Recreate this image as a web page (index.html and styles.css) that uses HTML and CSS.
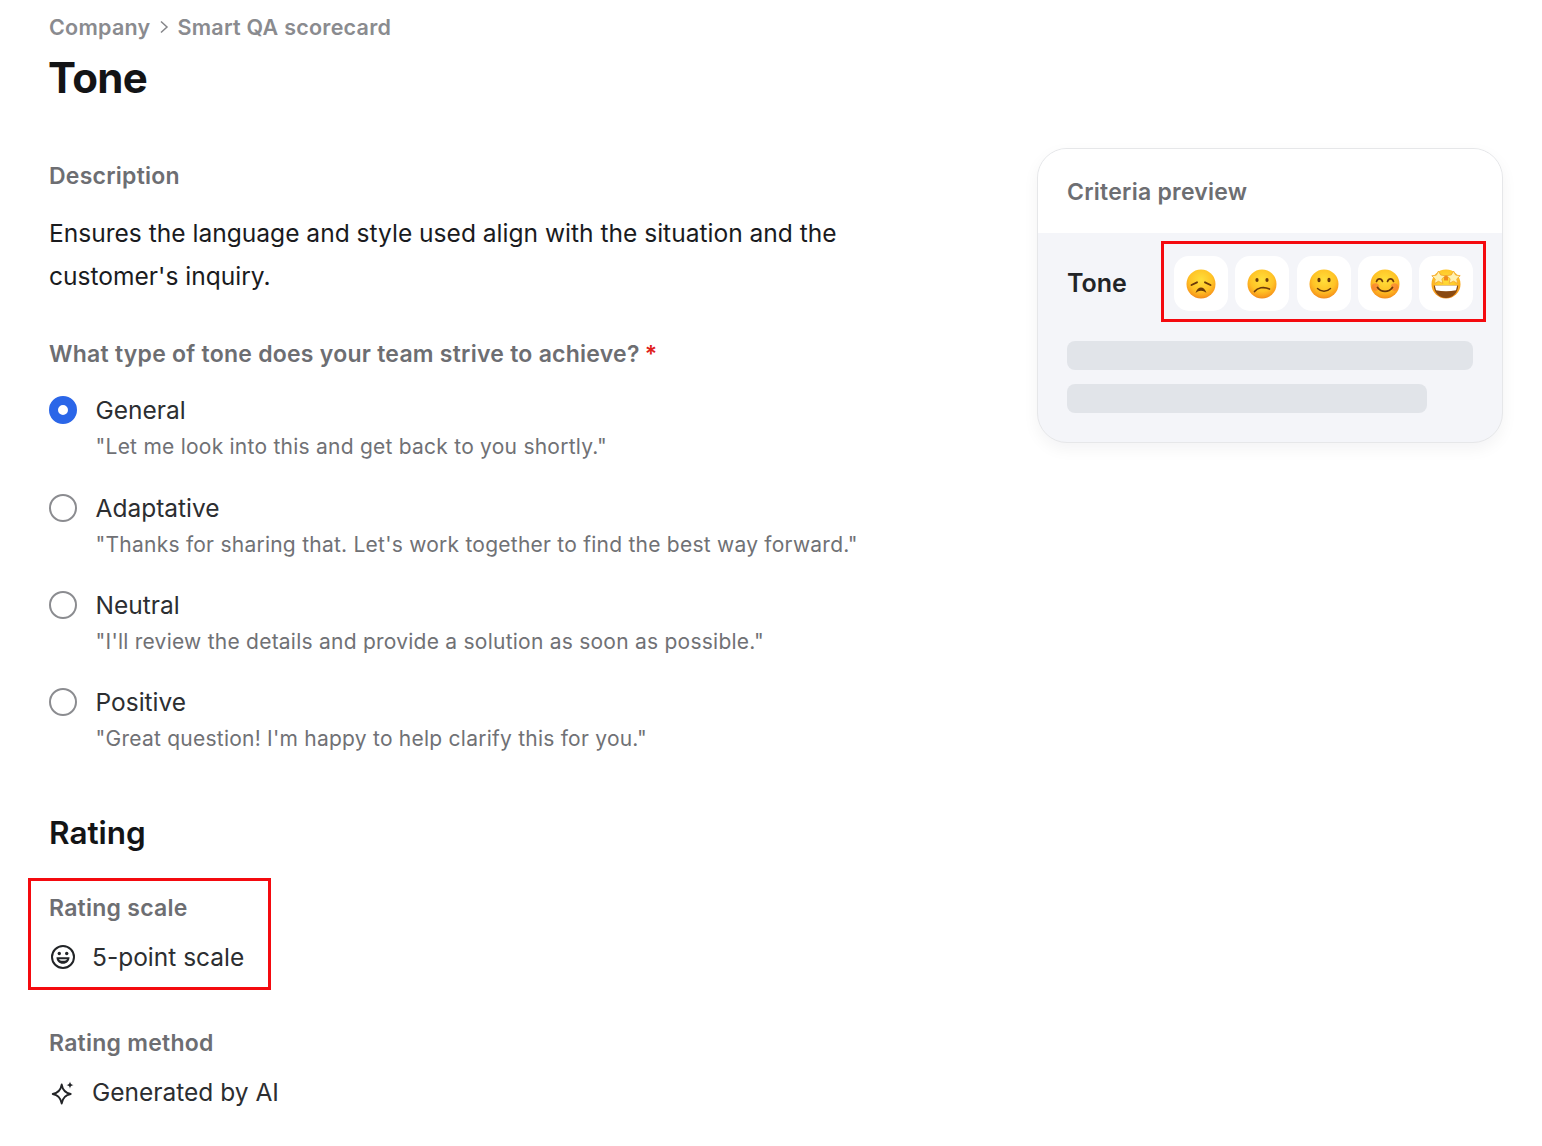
FILE: index.html
```html
<!DOCTYPE html>
<html lang="en">
<head>
<meta charset="utf-8">
<title>Tone</title>
<link rel="stylesheet" href="styles.css">
</head>
<body>
<svg class="defs" width="0" height="0" aria-hidden="true">
  <defs>
    <radialGradient id="face" cx="50%" cy="36%" r="66%">
      <stop offset="0" stop-color="#ffdf3a"/>
      <stop offset="0.6" stop-color="#ffc326"/>
      <stop offset="0.88" stop-color="#f99c1c"/>
      <stop offset="1" stop-color="#e9821c"/>
    </radialGradient>
  </defs>
</svg>
<main class="page">
  <section class="content">
    <nav class="crumbs">
      <span>Company</span>
      <svg class="chev" viewBox="0 0 12 16" width="12" height="16"><path d="M3 2.500 9 8l-6 5.500" fill="none" stroke="#85868a" stroke-width="1.500"/></svg>
      <span>Smart QA scorecard</span>
    </nav>
    <h1 class="title">Tone</h1>

    <h3 class="label desc-label">Description</h3>
    <p class="desc">Ensures the language and style used align with the situation and the customer's inquiry.</p>

    <h3 class="label q-label">What type of tone does your team strive to achieve? <span class="req">*</span></h3>
    <div class="options">
      <div class="opt">
        <span class="radio on"></span>
        <div class="opt-text"><div class="opt-name">General</div><div class="opt-sub">"Let me look into this and get back to you shortly."</div></div>
      </div>
      <div class="opt">
        <span class="radio"></span>
        <div class="opt-text"><div class="opt-name">Adaptative</div><div class="opt-sub">"Thanks for sharing that. Let's work together to find the best way forward."</div></div>
      </div>
      <div class="opt">
        <span class="radio"></span>
        <div class="opt-text"><div class="opt-name">Neutral</div><div class="opt-sub">"I'll review the details and provide a solution as soon as possible."</div></div>
      </div>
      <div class="opt">
        <span class="radio"></span>
        <div class="opt-text"><div class="opt-name">Positive</div><div class="opt-sub">"Great question! I'm happy to help clarify this for you."</div></div>
      </div>
    </div>

    <h2 class="section">Rating</h2>
    <div class="field marked">
      <h3 class="label">Rating scale</h3>
      <div class="value">
        <svg viewBox="0 0 28 28" width="28" height="28" fill="none"><circle cx="14" cy="14" r="11" stroke="#222427" stroke-width="2"/><circle cx="10.300" cy="10.500" r="1.700" fill="#222427"/><circle cx="17.700" cy="10.500" r="1.700" fill="#222427"/><path d="M7.500 14.300h13c0 3.900-2.800 6.500-6.500 6.500s-6.500-2.600-6.500-6.500Z" fill="#222427"/><path d="M10 16.200h8c-.5 1.100-2 1.500-4 1.500s-3.500-.4-4-1.500Z" fill="#fff"/></svg>
        <span>5-point scale</span>
      </div>
    </div>
    <div class="field">
      <h3 class="label">Rating method</h3>
      <div class="value">
        <svg viewBox="0 0 28 28" width="28" height="28" fill="none"><path d="M12.700 6.500c.9 5.600 3.400 8.500 9 9.500-5.600 1-8.100 3.900-9 9.500-.9-5.600-3.400-8.500-9-9.500 5.600-1 8.100-3.900 9-9.500Z" stroke="#222427" stroke-width="1.800" stroke-linejoin="round"/><path d="M21 3.500c.4 2.300 1.300 3.200 3.600 3.600-2.300.4-3.200 1.300-3.600 3.600-.4-2.300-1.300-3.200-3.600-3.600 2.300-.4 3.200-1.300 3.600-3.600Z" fill="#222427"/></svg>
        <span>Generated by AI</span>
      </div>
    </div>
  </section>

  <aside class="card">
    <header class="card-head">Criteria preview</header>
    <div class="card-body">
      <div class="rating-row">
        <span class="rating-name">Tone</span>
        <div class="tiles">
          <span class="tile"><svg viewBox="0 0 32 32" width="32" height="32"><circle cx="16" cy="16" r="14.500" fill="url(#face)"/><path d="M6.500 17 12 14.300M25.500 17 20 14.300" stroke="#6b3a0a" stroke-width="1.900" stroke-linecap="round" fill="none"/><path d="M10.500 25c1.300-3.800 3.300-5.500 5.500-5.500s4.200 1.700 5.500 5.500c-1.900-1.500-3.600-2.300-5.500-2.300s-3.600.8-5.500 2.300Z" fill="#6b3a0a"/></svg></span>
          <span class="tile"><svg viewBox="0 0 32 32" width="32" height="32"><circle cx="16" cy="16" r="14.500" fill="url(#face)"/><ellipse cx="11" cy="12" rx="1.600" ry="2" fill="#6b3a0a"/><ellipse cx="21" cy="12" rx="1.600" ry="2" fill="#6b3a0a"/><path d="M8.500 23.500c3-3.800 9-5.300 15-2.500" stroke="#6b3a0a" stroke-width="1.700" stroke-linecap="round" fill="none"/></svg></span>
          <span class="tile"><svg viewBox="0 0 32 32" width="32" height="32"><circle cx="16" cy="16" r="14.500" fill="url(#face)"/><ellipse cx="11" cy="12" rx="1.600" ry="2.300" fill="#6b3a0a"/><ellipse cx="21" cy="12" rx="1.600" ry="2.300" fill="#6b3a0a"/><path d="M9.500 20.500c3.500 3.600 9.500 3.600 13 0" stroke="#6b3a0a" stroke-width="1.500" stroke-linecap="round" fill="none"/></svg></span>
          <span class="tile"><svg viewBox="0 0 32 32" width="32" height="32"><circle cx="16" cy="16" r="14.500" fill="url(#face)"/><circle cx="6.500" cy="19" r="3.800" fill="#f5693b" opacity=".55"/><circle cx="25.500" cy="19" r="3.800" fill="#f5693b" opacity=".55"/><path d="M7.500 13.500c1.200-3.600 4.800-3.600 6 0M18.500 13.500c1.200-3.600 4.800-3.600 6 0" stroke="#6b3a0a" stroke-width="1.700" stroke-linecap="round" fill="none"/><path d="M8.500 19.500c3.800 5.200 11.200 5.200 15 0" stroke="#6b3a0a" stroke-width="1.800" stroke-linecap="round" fill="none"/></svg></span>
          <span class="tile"><svg viewBox="0 0 32 32" width="32" height="32"><circle cx="16" cy="16" r="14.500" fill="url(#face)"/><path d="M14 8.500c.6-1.800 3.400-1.800 4 0v4h-4Z" fill="#f08a1d"/><path d="M3.800 17.500h24.400c-.3 7.500-5.500 12.500-12.200 12.500S4.100 25 3.800 17.500Z" fill="#8a4a12"/><path d="M4.800 17.500h22.400l-1.200 4.700c-6.200 1.300-13.800 1.300-20 0Z" fill="#fff"/><path d="M8.500 3l2.200 4 4.600.7-3.400 3.200.9 4.600-4.300-2.200-4.100 2.300.8-4.600-3.400-3.200 4.600-.7Z" fill="#fff1b0" stroke="#f3a92f" stroke-width=".9" stroke-linejoin="round"/><path d="M23.500 3l2.100 4 4.600.7-3.400 3.200.8 4.600-4.100-2.300-4.300 2.200.9-4.600-3.400-3.200 4.600-.7Z" fill="#fff1b0" stroke="#f3a92f" stroke-width=".9" stroke-linejoin="round"/></svg></span>
        </div>
        <span class="mark-tiles"></span>
      </div>
      <div class="bar"></div>
      <div class="bar short"></div>
    </div>
  </aside>
</main>
</body>
</html>
```
FILE: styles.css
```css
*, *::before, *::after { box-sizing: border-box; }
html, body { margin: 0; padding: 0; background: #fff; }
body {
  font-family: Inter, "Liberation Sans", sans-serif;
  color: #222427;
  width: 1542px;
  height: 1146px;
  overflow: hidden;
}
.defs { position: absolute; }
h1, h2, h3, p { margin: 0; }

.page {
  display: flex;
  justify-content: space-between;
  align-items: flex-start;
  padding: 12px 39px 0 49px;
}
.content { width: 900px; }

.crumbs {
  display: flex;
  align-items: center;
  gap: 7.500px;
  height: 30px;
  font-size: 21.500px;
  font-weight: 600;
  letter-spacing: 0.25px;
  color: #8a8b8f;
}
.title {
  margin-top: 8px;
  margin-left: -1px;
  font-size: 42px;
  line-height: 56px;
  font-weight: 700;
  letter-spacing: -0.6px;
  color: #131416;
}

.label {
  font-size: 23px;
  line-height: 30px;
  font-weight: 600;
  letter-spacing: 0.25px;
  color: #6d6e72;
}
.desc-label { margin-top: 55px; }
.desc {
  margin-top: 21px;
  width: 820px;
  font-size: 24.560px;
  line-height: 43px;
  color: #1a1b1e;
}
.q-label { margin-top: 41px; }
.req { margin-left: -1px; color: #e0201c; }

.options { margin-top: 26px; }
.opt {
  display: flex;
  gap: 18.500px;
  height: 97px;
}
.opt:first-child { height: 98px; }
.radio {
  flex: none;
  width: 28px;
  height: 28px;
  margin-top: 1px;
  border-radius: 50%;
  border: 2px solid #8b8c90;
  background: #fff;
}
.radio.on { border: 9px solid #2b66e8; }
.opt-name { font-size: 24.500px; line-height: 30px; color: #2c2e31; }
.opt-sub { margin-top: 7px; font-size: 21px; line-height: 30px; letter-spacing: 0.24px; color: #707175; }

.section {
  margin-top: 28px;
  font-size: 31.500px;
  line-height: 42px;
  font-weight: 600;
  color: #131416;
}
.field { position: relative; margin-top: 39px; }
.field + .field { margin-top: 54px; }
.value {
  display: flex;
  align-items: center;
  gap: 15px;
  margin-top: 17px;
  height: 34px;
  font-size: 24.500px;
  color: #2c2e31;
}
.marked::after {
  content: "";
  position: absolute;
  left: -21px;
  top: -15px;
  width: 243px;
  height: 112px;
  border: 3px solid #f40a0f;
}

.card {
  width: 466px;
  height: 295px;
  margin-top: 136px;
  border: 1px solid #e6e7e9;
  border-radius: 30px;
  background: #f4f5f9;
  overflow: hidden;
  box-shadow: 0 6px 16px rgba(20, 25, 40, 0.05);
}
.card-head {
  height: 84px;
  padding: 28px 29px 0;
  background: #fff;
  font-size: 23px;
  line-height: 30px;
  font-weight: 600;
  letter-spacing: 0.25px;
  color: #6d6e72;
}
.card-body { padding: 0 29px; }
.rating-row {
  position: relative;
  display: flex;
  align-items: center;
  justify-content: space-between;
  height: 100px;
  margin-bottom: 8px;
}
.rating-name { font-size: 25px; font-weight: 600; color: #222427; }
.tiles { display: flex; gap: 7.250px; margin-top: 1px; }
.tile {
  display: flex;
  align-items: center;
  justify-content: center;
  width: 54px;
  height: 55px;
  border-radius: 15px;
  background: #fff;
}
.mark-tiles {
  position: absolute;
  right: -13px;
  top: 8px;
  width: 325px;
  height: 81px;
  border: 3px solid #f40a0f;
}
.bar { height: 29px; border-radius: 8px; background: #e1e4e9; }
.bar.short { width: 360px; margin-top: 14px; }
```
